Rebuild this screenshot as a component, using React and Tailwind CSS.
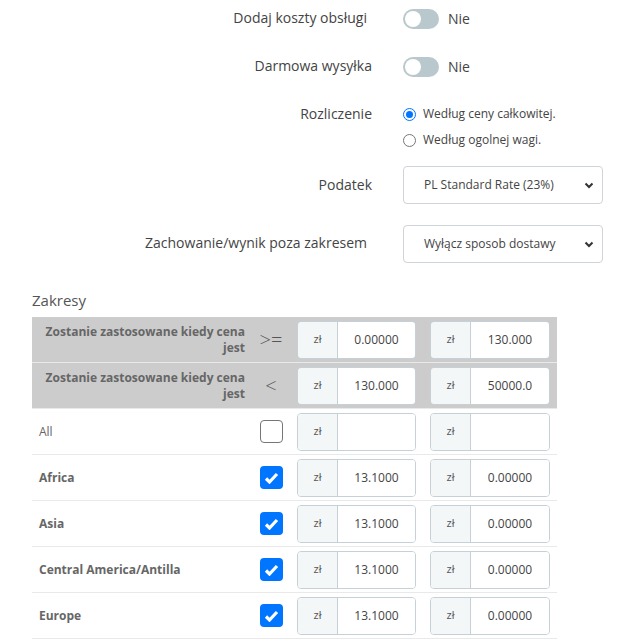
import React from 'react';

const Toggle = () => (
    <div className="flex items-center">
        <div className="w-[36px] h-[20px] rounded-full bg-[#b9c8cd] flex items-center px-[2px]">
            <div className="w-[16px] h-[16px] rounded-full bg-white" />
        </div>
        <span className="ml-[9px] text-[14px] text-[#444]">Nie</span>
    </div>
);

const Radio = ({ checked, label }) => (
    <div className="flex items-center h-[26px]">
        {checked ? (
            <div className="w-[13px] h-[13px] rounded-full border-[1.5px] border-[#0075ff] flex items-center justify-center">
                <div className="w-[7px] h-[7px] rounded-full bg-[#0075ff]" />
            </div>
        ) : (
            <div className="w-[13px] h-[13px] rounded-full border border-[#767676] bg-white" />
        )}
        <span className="ml-[7px] text-[12px] text-[#444]">{label}</span>
    </div>
);

const Select = ({ value }) => (
    <div className="w-[200px] h-[38px] rounded-[4px] border border-[#ced4da] bg-white flex items-center pl-[20px] pr-[8px]">
        <span className="flex-1 text-[12px] text-[#444]">{value}</span>
        <svg width="10" height="7" viewBox="0 0 10 7">
            <path d="M1.5 1.5l3.5 3.5 3.5-3.5" fill="none" stroke="#333" strokeWidth="2" />
        </svg>
    </div>
);

const FormRow = ({ label, children, className = '', labelClass = 'items-center' }) => (
    <div className={`flex ${className}`}>
        <div className={`w-[372px] flex justify-end text-[14px] text-[#444] ${labelClass}`}>{label}</div>
        <div className="ml-[31px]">{children}</div>
    </div>
);

const PriceGroup = ({ value, width = 'w-[119px]' }) => (
    <div className={`flex h-[38px] ${width} rounded-[4px] border border-[#c5d1d6] overflow-hidden`}>
        <div className="w-[40px] bg-[#f3f7f8] border-r border-[#c5d1d6] flex items-center justify-center text-[11px] text-[#555]">
            zł
        </div>
        <div className="flex-1 bg-white flex items-center justify-center text-[12px] text-[#444]">{value}</div>
    </div>
);

const CheckBox = ({ checked }) =>
    checked ? (
        <div className="w-[23px] h-[23px] rounded-[4px] bg-[#0075ff] flex items-center justify-center">
            <svg width="15" height="12" viewBox="0 0 15 12">
                <path d="M2 6.5l3.5 3.5L13 2" fill="none" stroke="white" strokeWidth="3.2" />
            </svg>
        </div>
    ) : (
        <div className="w-[23px] h-[23px] rounded-[4px] border border-[#767676] bg-white" />
    );

const RangeRow = ({ header, label, bold, middle, from, to }) => (
    <div className={`flex items-center h-[46px] border-b border-[#e9e9e9] ${header ? 'bg-[#cccccc]' : 'bg-white'}`}>
        <div className={`w-[220px] px-[7px] text-[12px] text-[#666] leading-[16px] ${header ? 'text-right font-bold' : bold ? 'font-bold' : ''}`}>
            {label}
        </div>
        <div className="w-[38px] flex justify-center text-[20px] font-light text-[#555]">{middle}</div>
        <div className="ml-[7px]">
            <PriceGroup value={from} />
        </div>
        <div className="ml-[14px]">
            <PriceGroup value={to} width="w-[120px]" />
        </div>
    </div>
);

const zones = ['Africa', 'Asia', 'Central America/Antilla', 'Europe'];

export default function App() {
    return (
        <div className="w-[628px] h-[639px] overflow-hidden bg-white" style={{ fontFamily: '"Open Sans", sans-serif' }}>
            <FormRow label={<div className="pr-[5px] -mt-[1px]">Dodaj koszty obsługi</div>} className="mt-[8px] h-[20px]">
                <Toggle />
            </FormRow>
            <FormRow label={<div className="-mt-[1px]">Darmowa wysyłka</div>} className="mt-[28px] h-[20px]">
                <Toggle />
            </FormRow>
            <FormRow label={<div className="h-[24px] flex items-center">Rozliczenie</div>} labelClass="items-start" className="mt-[25px]">
                <Radio checked label="Według ceny całkowitej." />
                <Radio label="Według ogolnej wagi." />
            </FormRow>
            <FormRow label={<div className="-mt-[2px]">Podatek</div>} className="mt-[13px]">
                <Select value="PL Standard Rate (23%)" />
            </FormRow>
            <FormRow label={<div className="-mt-[4px] pr-[5px]">Zachowanie/wynik poza zakresem</div>} className="mt-[21px]">
                <Select value="Wyłącz sposob dostawy" />
            </FormRow>

            <div className="ml-[32px] mt-[27px] text-[15px] leading-[20px] text-[#555]">Zakresy</div>

            <div className="ml-[32px] mt-[7px] w-[525px]">
                <RangeRow header label={<>Zostanie zastosowane kiedy cena<br />jest</>} middle="&gt;=" from="0.00000" to="130.000" />
                <RangeRow header label={<>Zostanie zastosowane kiedy cena<br />jest</>} middle="&lt;" from="130.000" to="50000.0" />
                <RangeRow label="All" middle={<CheckBox />} from="" to="" />
                {zones.map((z) => (
                    <RangeRow key={z} bold label={z} middle={<CheckBox checked />} from="13.1000" to="0.00000" />
                ))}
            </div>
        </div>
    );
}
